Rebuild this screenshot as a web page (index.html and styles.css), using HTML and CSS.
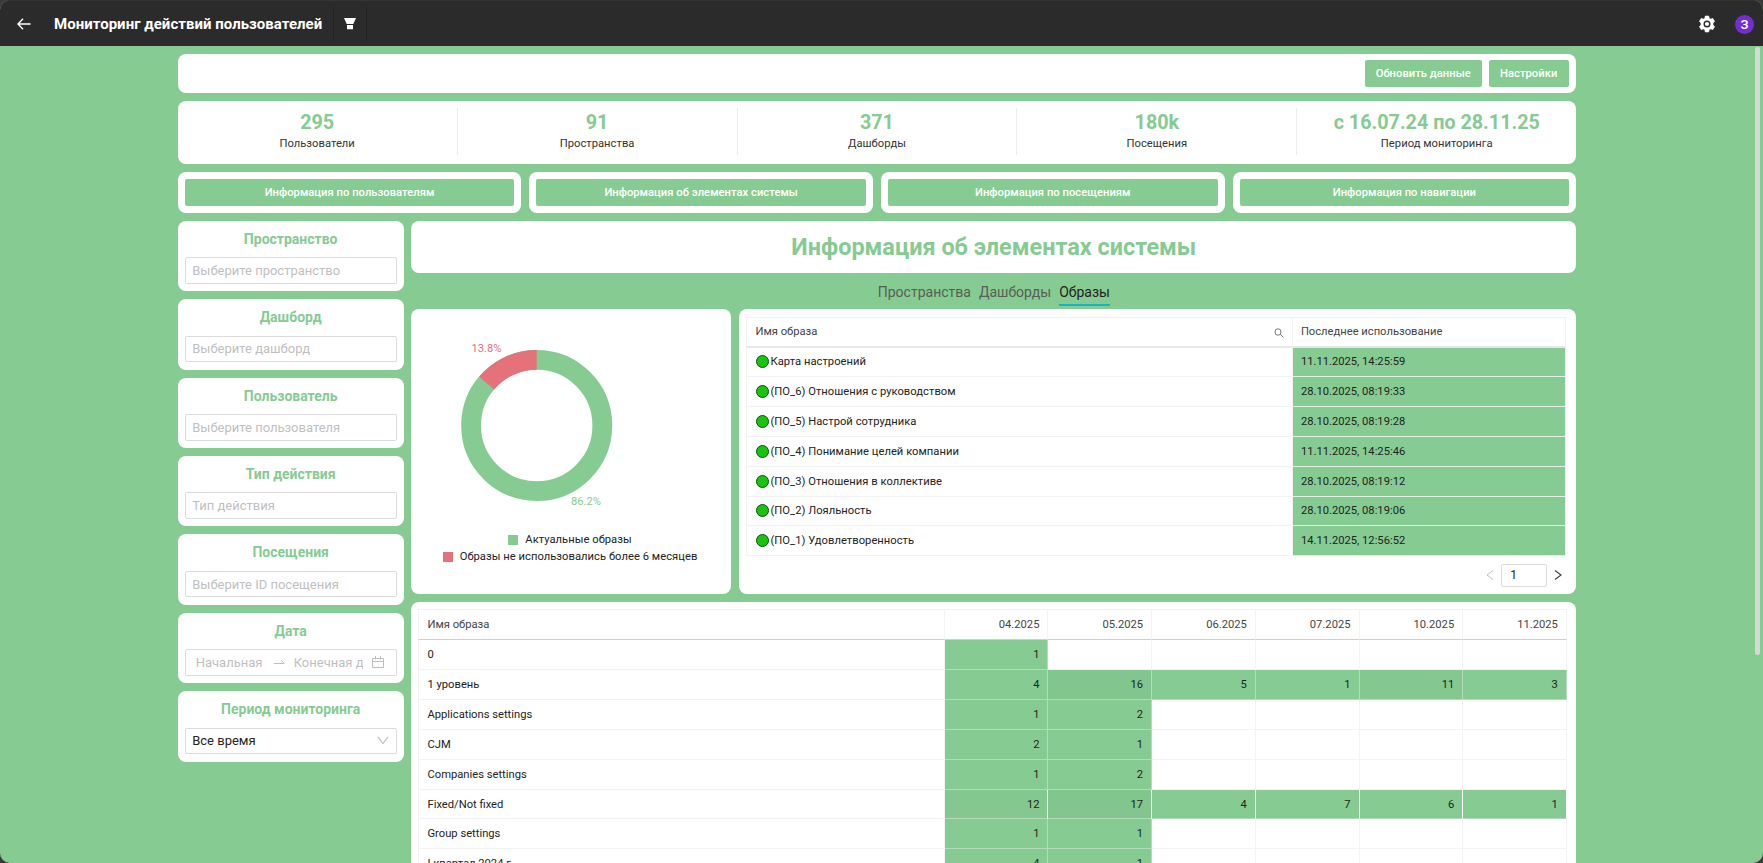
FILE: index.html
```html
<!DOCTYPE html>
<html lang="ru">
<head>
  <meta charset="UTF-8"/>
  <title>Мониторинг действий пользователей</title>
  <link rel="stylesheet" href="styles.css">
</head>
<body>
<div class="window">
  <header class="topbar">
    <svg class="back" width="14" height="12" viewBox="0 0 14 12"><path d="M6 .8 1 6l5 5.200M1 6h12.600" fill="none" stroke="#fff" stroke-width="1.400"/></svg>
    <h1>Мониторинг действий пользователей</h1>
    <div class="filter">
      <svg width="12" height="12" viewBox="0 0 12 12"><path d="M0 0h12L9.300 6H2.700zM3 7h6v4.200H3z" fill="#fff"/></svg>
    </div>
    <svg class="gear" width="18" height="18" viewBox="0 0 18 18"><path d="M7.300 1h3.400l.5 2.200 1.500.9 2.200-.7 1.700 3-1.600 1.600v2l1.600 1.600-1.700 3-2.200-.7-1.500.9-.5 2.200H7.300l-.5-2.200-1.500-.9-2.200.7-1.700-3L3 10V8L1.400 6.400l1.700-3 2.200.7 1.500-.9z" fill="#fff" stroke="#fff" stroke-width=".6" stroke-linejoin="round"/><circle cx="9" cy="9" r="2.800" fill="#fff" stroke="#2b2b2b" stroke-width="1.400"/></svg>
    <span class="avatar">З</span>
  </header>

  <div class="scrollbar"></div>

  <main class="board">
    <section class="card actions">
      <button>Обновить данные</button>
      <button>Настройки</button>
    </section>

    <section class="card stats">
      <div><b>295</b><span>Пользователи</span></div>
      <div><b>91</b><span>Пространства</span></div>
      <div><b>371</b><span>Дашборды</span></div>
      <div><b>180k</b><span>Посещения</span></div>
      <div><b>с 16.07.24 по 28.11.25</b><span>Период мониторинга</span></div>
    </section>

    <nav class="sections">
      <div class="card"><button>Информация по пользователям</button></div>
      <div class="card"><button>Информация об элементах системы</button></div>
      <div class="card"><button>Информация по посещениям</button></div>
      <div class="card"><button>Информация по навигации</button></div>
    </nav>

    <div class="columns">
      <aside>
        <div class="card field"><h3>Пространство</h3><div class="input">Выберите пространство</div></div>
        <div class="card field"><h3>Дашборд</h3><div class="input">Выберите дашборд</div></div>
        <div class="card field"><h3>Пользователь</h3><div class="input">Выберите пользователя</div></div>
        <div class="card field"><h3>Тип действия</h3><div class="input">Тип действия</div></div>
        <div class="card field"><h3>Посещения</h3><div class="input">Выберите ID посещения</div></div>
        <div class="card field">
          <h3>Дата</h3>
          <div class="input range">
            <span class="from">Начальная</span>
            <svg class="arrow" width="11" height="6" viewBox="0 0 11 6"><path d="M0 4.500h10.200L7 1" fill="none" stroke="#bfbfbf"/></svg>
            <span class="to">Конечная дата</span>
            <svg class="calendar" width="12" height="12" viewBox="0 0 12 12"><path d="M.5 2.500h11v9H.5zM.5 5.500h11M3.500 0v3.500M8.500 0v3.500" fill="none" stroke="#bfbfbf"/></svg>
          </div>
        </div>
        <div class="card field">
          <h3>Период мониторинга</h3>
          <div class="input select">Все время
            <svg width="12" height="9" viewBox="0 0 12 9"><path d="M1 .8 6 7.600 11 .8" fill="none" stroke="#bfbfbf" stroke-width="1.100"/></svg>
          </div>
        </div>
      </aside>

      <div class="content">
        <div class="card title"><h2>Информация об элементах системы</h2></div>

        <div class="tabs">
          <span>Пространства</span>
          <span>Дашборды</span>
          <span class="active">Образы</span>
        </div>

        <div class="widgets">
          <div class="card chart">
            <svg width="320" height="216" viewBox="0 0 320 216">
              <g fill="none" stroke-width="19.800" transform="rotate(-90 125.700 110.500)">
                <circle cx="125.700" cy="110.500" r="65.600" stroke="#86cb92"/>
                <circle cx="125.700" cy="110.500" r="65.600" stroke="#e5727b" pathLength="100" stroke-dasharray="13.800 86.200" stroke-dashoffset="-86.200"/>
              </g>
              <text x="60.500" y="36.500" fill="#e5727b">13.8%</text>
              <text x="160" y="189.500" fill="#86cb92">86.2%</text>
            </svg>
            <div class="legend"><i></i>Актуальные образы</div>
            <div class="legend old"><i></i>Образы не использовались более 6 месяцев</div>
          </div>

          <div class="card usage">
            <table>
              <thead>
                <tr>
                  <th>Имя образа <svg width="10" height="10" viewBox="0 0 10 10"><path d="M6.300 6.300 9.500 9.500M7 4a3 3.200 0 1 1-6 0a3 3.200 0 1 1 6 0z" fill="none" stroke="#777"/></svg></th>
                  <th>Последнее использование</th>
                </tr>
              </thead>
              <tbody>
                <tr><td><i class="dot"></i>Карта настроений</td><td>11.11.2025, 14:25:59</td></tr>
                <tr><td><i class="dot"></i>(ПО_6) Отношения с руководством</td><td>28.10.2025, 08:19:33</td></tr>
                <tr><td><i class="dot"></i>(ПО_5) Настрой сотрудника</td><td>28.10.2025, 08:19:28</td></tr>
                <tr><td><i class="dot"></i>(ПО_4) Понимание целей компании</td><td>11.11.2025, 14:25:46</td></tr>
                <tr><td><i class="dot"></i>(ПО_3) Отношения в коллективе</td><td>28.10.2025, 08:19:12</td></tr>
                <tr><td><i class="dot"></i>(ПО_2) Лояльность</td><td>28.10.2025, 08:19:06</td></tr>
                <tr><td><i class="dot"></i>(ПО_1) Удовлетворенность</td><td>14.11.2025, 12:56:52</td></tr>
              </tbody>
            </table>
            <div class="pager">
              <svg width="8" height="10" viewBox="0 0 8 10"><path d="M7 .5 1 5l6 4.500" fill="none" stroke="#bfbfbf"/></svg>
              <div class="page">1</div>
              <svg width="8" height="10" viewBox="0 0 8 10"><path d="M1 .5 7 5 1 9.500" fill="none" stroke="#444" stroke-width="1.200"/></svg>
            </div>
          </div>
        </div>

        <div class="card months">
          <table>
            <thead>
              <tr><th>Имя образа</th><th>04.2025</th><th>05.2025</th><th>06.2025</th><th>07.2025</th><th>10.2025</th><th>11.2025</th></tr>
            </thead>
            <tbody>
              <tr><td>0</td><td class="on">1</td><td></td><td></td><td></td><td></td><td></td></tr>
              <tr><td>1 уровень</td><td class="on">4</td><td class="on high">16</td><td class="on">5</td><td class="on">1</td><td class="on mid">11</td><td class="on">3</td></tr>
              <tr><td>Applications settings</td><td class="on">1</td><td class="on">2</td><td></td><td></td><td></td><td></td></tr>
              <tr><td>CJM</td><td class="on">2</td><td class="on">1</td><td></td><td></td><td></td><td></td></tr>
              <tr><td>Companies settings</td><td class="on">1</td><td class="on">2</td><td></td><td></td><td></td><td></td></tr>
              <tr class="split"><td>Fixed/Not fixed</td><td class="on mid">12</td><td class="on high">17</td><td class="on">4</td><td class="on">7</td><td class="on">6</td><td class="on">1</td></tr>
              <tr><td>Group settings</td><td class="on">1</td><td class="on">1</td><td></td><td></td><td></td><td></td></tr>
              <tr><td>I квартал 2024 г.</td><td class="on">4</td><td class="on">1</td><td></td><td></td><td></td><td></td></tr>
            </tbody>
          </table>
        </div>
      </div>
    </div>
  </main>
</div>
</body>
</html>
```
FILE: styles.css
```css
* { box-sizing:border-box; }
body { margin:0; background:#3a3a3a; font-family:Roboto,sans-serif; font-size:11.2px; color:#222; }
h1,h2,h3 { margin:0; }
svg { display:block; flex:none; }
button { padding:0; border:none; border-radius:2px; background:#86cb92; color:#fff; font:500 11.2px Roboto,sans-serif; letter-spacing:0.03px; }

.window { position:relative; height:863px; overflow:hidden; border-radius:10px; background:#86cb92; }
.topbar { display:flex; align-items:center; height:46px; padding:1px 9px 0 17px; background:#2b2b2b; border-top:1px solid #333; }
.topbar h1 { margin-left:23px; width:279px; color:#fff; font-size:15px; font-weight:700; letter-spacing:0.03px; white-space:nowrap; }
.filter { display:flex; align-items:center; justify-content:center; width:34px; height:34px; border:solid #222; border-width:0 1px; }
.gear { margin-left:auto; }
.avatar { width:19px; height:19px; margin-left:19px; border-radius:50%; background:#722ed1; color:#fff; font-size:13px; font-weight:500; line-height:19px; text-align:center; }
.scrollbar { position:absolute; top:47px; right:3px; width:5px; height:608px; border-radius:3px; background:#d6d9d6; }

.board { width:1398.500px; margin:7.500px 0 0 177.700px; }
.card { background:#fff; border-radius:8px; }
.actions { display:flex; justify-content:flex-end; gap:7px; height:39.500px; padding:6.500px 7.500px 6px; }
.actions button:first-child { width:117px; }
.actions button { width:80px; }

.stats { display:flex; height:63.300px; margin-top:8px; padding:7px 0 9px; }
.stats div { flex:1; display:flex; flex-direction:column; align-items:center; border-left:1px solid #ececec; }
.stats div:first-child { border:none; }
.stats b { margin-top:4px; font-size:19.750px; font-weight:700; line-height:22px; color:#86cb92; }
.stats span { line-height:19px; letter-spacing:0.030px; color:#333; }

.sections { display:grid; grid-template-columns:repeat(4,1fr); gap:8px; margin-top:7.800px; }
.sections .card { height:40.900px; padding:7px; }
.sections button { width:100%; height:27px; }

.columns { display:flex; gap:7.800px; margin-top:7.800px; }
aside { width:226px; flex:none; }
.field { height:70.500px; margin-bottom:7.900px; padding:8px 7px 0; }
.field h3 { height:28.500px; font-size:14px; font-weight:700; line-height:20px; text-align:center; color:#86cb92; }
.input { display:flex; align-items:center; height:26.500px; padding:0 6.500px; border:1px solid #dcdcdc; border-radius:2px; font-size:13px; color:#bfbfbf; white-space:nowrap; }
.range { padding:0 12px 0 10px; }
.range .from { width:67px; }
.range .arrow { margin:0 9px 0 11px; }
.range .to { width:69px; overflow:hidden; }
.calendar { margin-left:auto; }
.select { justify-content:space-between; color:#222; }

.content { flex:1; min-width:0; }
.title { display:flex; align-items:center; justify-content:center; height:52px; }
.title h2 { font-size:23.450px; color:#86cb92; }
.tabs { display:flex; justify-content:center; gap:8px; height:36.600px; padding-top:9px; font-size:14px; color:#555f57; }
.tabs span { height:24px; line-height:21px; }
.tabs .active { color:#222; border-bottom:2px solid #13b5c4; }

.widgets { display:flex; gap:8px; height:285px; }
.chart { width:320px; padding-top:6px; }
.chart text { font-size:11.200px; }
.legend { display:flex; align-items:center; justify-content:center; height:17px; padding-right:3px; letter-spacing:0.040px; }
.legend i { width:10px; height:10px; margin-right:7px; background:#86cb92; }
.legend.old i { background:#e5727b; }

table,thead,tbody { display:block; }
tr { display:grid; height:29.850px; }
th,td { display:flex; align-items:center; padding:0 8px; border:solid #f3f3f3; border-width:0 1px 1px 0; font-weight:400; white-space:nowrap; }
th { color:#444; }
th:first-child,td:first-child { border-left:1px solid #f3f3f3; }
thead tr { border-top:1px solid #f3f3f3; }

.usage { flex:1; padding:7.700px 10.300px 0 7px; }
.usage tr { grid-template-columns:1fr 273px; height:29.800px; }
.usage thead tr { height:30.500px; }
.usage th { border-bottom:2px solid #e8e8e8; }
.usage th svg { margin:2px 0 0 auto; }
.usage td:first-child { letter-spacing:0.030px; }
.usage td:last-child { background:#86cb92; border-bottom-color:#e4efe6; }
.dot { width:13px; height:13px; margin:0 1px; border:1px solid #134a13; border-radius:50%; background:#16c60c; }
.pager { display:flex; align-items:center; justify-content:flex-end; gap:7px; height:38px; padding-right:3.700px; }
.page { width:46px; height:23px; padding-left:8px; border:1px solid #dcdcdc; border-radius:2px; line-height:21px; font-size:12px; }

.months { height:400px; margin-top:8px; padding:7px 9.300px 0 7px; }
.months tr { grid-template-columns:1fr repeat(6,103.700px); }
.months thead tr { height:31px; }
.months th { border-bottom-color:#cfcfcf; }
.months th,.months td { justify-content:flex-end; }
.months th:first-child,.months td:first-child { justify-content:flex-start; }
.months .on { background:#86cb92; border-color:#b4dcbb; }
.months .mid { background:#84c890; }
.months .high { background:#82c58e; }
.months .split .on { border-right-color:#fff; }
```
